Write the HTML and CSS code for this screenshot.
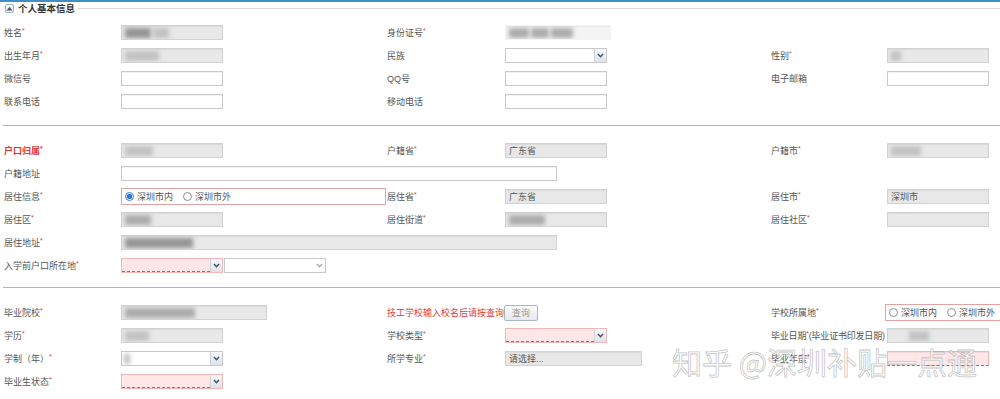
FILE: index.html
```html
<!DOCTYPE html>
<html lang="zh-CN">
  <head>
    <meta charset="UTF-8" />
    <title>个人基本信息</title>
    <link rel="stylesheet" href="styles.css">
  </head>
  <body>
    <div class="page">
      <div class="legend">
        <span class="legend-toggle">
          <svg width="7" height="5" viewBox="0 0 7 5"><path d="M0.5 4.5 L3.5 0.8 L6.5 4.5 Z" fill="#4a5d78" /></svg>
        </span>
        <span class="legend-title">个人基本信息</span>
        <span class="legend-line"></span>
      </div>

      <!-- 基本信息 -->
      <div class="section section-first">
        <div class="form-grid">
          <label class="lbl">姓名<i class="req">*</i></label>
          <div class="fld"><div class="input ro"><span class="blur b-dark" style="width: 26px"></span><span class="blur b-light" style="width: 16px"></span></div></div>
          <label class="lbl">身份证号<i class="req">*</i></label>
          <div class="fld"><div class="input ro plain" style="width: 106px"><span class="blur b-mid" style="width: 20px"></span><span class="blur b-mid" style="width: 18px"></span><span class="blur b-mid" style="width: 22px"></span></div></div>
          <span></span><span></span>

          <label class="lbl">出生年月<i class="req">*</i></label>
          <div class="fld"><div class="input ro"><span class="blur b-light" style="width: 34px"></span></div></div>
          <label class="lbl">民族</label>
          <div class="fld"><div class="select"><span class="sel-val"></span><span class="sel-btn"><svg width="7" height="5" viewBox="0 0 7 5"><path d="M1 1 L3.5 3.8 L6 1" fill="none" stroke="#3d4f6a" stroke-width="1.4" /></svg></span></div></div>
          <label class="lbl">性别<i class="req">*</i></label>
          <div class="fld"><div class="input ro"><span class="blur b-light" style="width: 10px"></span></div></div>

          <label class="lbl">微信号</label>
          <div class="fld"><div class="input"></div></div>
          <label class="lbl">QQ号</label>
          <div class="fld"><div class="input"></div></div>
          <label class="lbl">电子邮箱</label>
          <div class="fld"><div class="input"></div></div>

          <label class="lbl">联系电话</label>
          <div class="fld"><div class="input"></div></div>
          <label class="lbl">移动电话</label>
          <div class="fld"><div class="input"></div></div>
          <span></span><span></span>
        </div>
      </div>

      <!-- 户籍与居住 -->
      <div class="section">
        <div class="form-grid">
          <label class="lbl lbl-strong">户口归属<i class="req">*</i></label>
          <div class="fld"><div class="input ro"><span class="blur b-light" style="width: 28px"></span></div></div>
          <label class="lbl">户籍省<i class="req">*</i></label>
          <div class="fld"><div class="input ro">广东省</div></div>
          <label class="lbl">户籍市<i class="req">*</i></label>
          <div class="fld"><div class="input ro"><span class="blur b-light" style="width: 30px"></span></div></div>

          <label class="lbl">户籍地址</label>
          <div class="fld fld-wide"><div class="input wide"></div></div>
          <span></span><span></span>

          <label class="lbl">居住信息<i class="req">*</i></label>
          <div class="fld">
            <div class="radio-box">
              <span class="radio on"></span><span class="radio-text">深圳市内</span>
              <span class="radio"></span><span class="radio-text">深圳市外</span>
            </div>
          </div>
          <label class="lbl">居住省<i class="req">*</i></label>
          <div class="fld"><div class="input ro">广东省</div></div>
          <label class="lbl">居住市<i class="req">*</i></label>
          <div class="fld"><div class="input ro">深圳市</div></div>

          <label class="lbl">居住区<i class="req">*</i></label>
          <div class="fld"><div class="input ro"><span class="blur b-mid" style="width: 26px"></span></div></div>
          <label class="lbl">居住街道<i class="req">*</i></label>
          <div class="fld"><div class="input ro"><span class="blur b-mid" style="width: 36px"></span></div></div>
          <label class="lbl">居住社区<i class="req">*</i></label>
          <div class="fld"><div class="input ro"></div></div>

          <label class="lbl">居住地址<i class="req">*</i></label>
          <div class="fld fld-wide"><div class="input ro wide"><span class="blur b-dark" style="width: 68px"></span></div></div>
          <span></span><span></span>

          <label class="lbl">入学前户口所在地<i class="req">*</i></label>
          <div class="fld fld-pair">
            <div class="select invalid"><span class="sel-val"></span><span class="sel-btn"><svg width="7" height="5" viewBox="0 0 7 5"><path d="M1 1 L3.5 3.8 L6 1" fill="none" stroke="#3d4f6a" stroke-width="1.4" /></svg></span></div>
            <div class="select"><span class="sel-val"></span><span class="sel-btn pale"><svg width="7" height="5" viewBox="0 0 7 5"><path d="M1 1 L3.5 3.8 L6 1" fill="none" stroke="#9aa4b2" stroke-width="1.2" /></svg></span></div>
          </div>
          <span></span><span></span><span></span><span></span>
        </div>
      </div>

      <!-- 学业信息 -->
      <div class="section section-last">
        <div class="form-grid">
          <label class="lbl">毕业院校<i class="req">*</i></label>
          <div class="fld"><div class="input ro" style="width: 146px"><span class="blur b-mid" style="width: 70px"></span></div></div>
          <div class="notice">
            <span class="notice-text">技工学校输入校名后请按查询</span>
            <button class="btn-query">查询</button>
          </div>
          <label class="lbl">学校所属地<i class="req">*</i></label>
          <div class="fld">
            <div class="radio-box radio-box-short">
              <span class="radio"></span><span class="radio-text">深圳市内</span>
              <span class="radio"></span><span class="radio-text">深圳市外</span>
            </div>
          </div>

          <label class="lbl">学历<i class="req">*</i></label>
          <div class="fld"><div class="input ro"><span class="blur b-light" style="width: 24px"></span></div></div>
          <label class="lbl">学校类型<i class="req">*</i></label>
          <div class="fld"><div class="select invalid"><span class="sel-val"></span><span class="sel-btn"><svg width="7" height="5" viewBox="0 0 7 5"><path d="M1 1 L3.5 3.8 L6 1" fill="none" stroke="#3d4f6a" stroke-width="1.4" /></svg></span></div></div>
          <label class="lbl lbl-long">毕业日期<i class="req">*</i>(毕业证书印发日期)</label>
          <div class="fld"><div class="input ro"><span class="blur b-light" style="width: 20px; margin-left: 18px"></span></div></div>

          <label class="lbl">学制（年）<i class="req">*</i></label>
          <div class="fld"><div class="select"><span class="sel-val"><span class="blur b-light" style="width: 6px"></span></span><span class="sel-btn"><svg width="7" height="5" viewBox="0 0 7 5"><path d="M1 1 L3.5 3.8 L6 1" fill="none" stroke="#3d4f6a" stroke-width="1.4" /></svg></span></div></div>
          <label class="lbl">所学专业<i class="req">*</i></label>
          <div class="fld"><div class="input ro" style="width: 137px">请选择...</div></div>
          <label class="lbl">毕业年度<i class="req">*</i></label>
          <div class="fld"><div class="input invalid"></div></div>

          <label class="lbl">毕业生状态<i class="req">*</i></label>
          <div class="fld"><div class="select invalid"><span class="sel-val"></span><span class="sel-btn"><svg width="7" height="5" viewBox="0 0 7 5"><path d="M1 1 L3.5 3.8 L6 1" fill="none" stroke="#3d4f6a" stroke-width="1.4" /></svg></span></div></div>
          <span></span><span></span><span></span><span></span>
        </div>
      </div>

      <div class="watermark">知乎 @深圳补贴一点通</div>
    </div>
  </body>
</html>
```

FILE: styles.css
```css
* {
  margin: 0;
  padding: 0;
  box-sizing: border-box;
}

body {
  font-family: "Liberation Sans", "Noto Sans CJK SC", sans-serif;
  font-size: 9px;
  color: #555;
  background: #fff;
  width: 1000px;
  height: 399px;
  overflow: hidden;
}

.page {
  position: relative;
  border-top: 2px solid #3f8fbf;
  height: 399px;
}

.legend {
  display: flex;
  align-items: center;
  height: 12px;
  padding-left: 5px;
}

.legend-toggle {
  width: 9px;
  height: 9px;
  border: 1px solid #9fb0c6;
  border-radius: 2px;
  background: linear-gradient(#fdfdfe, #e4e9f0);
  display: flex;
  align-items: center;
  justify-content: center;
}

.legend-title {
  margin-left: 4px;
  font-size: 9.5px;
  font-weight: bold;
  color: #333;
}

.legend-line {
  flex: 1;
  height: 1px;
  background: #d6dbe0;
  margin-left: 3px;
}

.section {
  margin-left: 3px;
  padding: 13px 0 10px;
  border-bottom: 1px solid #b4b4b4;
}

.section-first {
  padding-top: 7px;
  padding-bottom: 12px;
}

.section-last {
  border-bottom: none;
}

.form-grid {
  display: grid;
  grid-template-columns: 117px 266px 118px 266px 116px 114px;
  grid-auto-rows: 23px;
  align-items: center;
  padding-left: 1px;
}

.lbl {
  white-space: nowrap;
  color: #555;
}

.lbl-strong {
  color: #d9362f;
  font-weight: bold;
}

.lbl-long {
  letter-spacing: -0.2px;
}

.req {
  font-style: normal;
  color: #e0403a;
  font-size: 7px;
  vertical-align: 3px;
}

.fld {
  display: flex;
  align-items: center;
  min-width: 0;
}

.fld-wide {
  grid-column: span 3;
}

.fld-pair {
  gap: 1px;
}

.input {
  width: 102px;
  height: 15px;
  border: 1px solid #c9c9c9;
  background: #fff;
  box-shadow: inset 0 1px 1px rgba(0, 0, 0, 0.06);
  display: flex;
  align-items: center;
  padding-left: 3px;
  color: #555;
  white-space: nowrap;
  overflow: hidden;
}

.input.ro {
  background: #e8e8e8;
  border-color: #d2d2d2;
}

.input.plain {
  background: #f4f4f4;
  border-color: #f4f4f4;
}

.input.wide {
  width: 436px;
}

.input.invalid {
  background: #ffe7e7;
  border-color: #f1b7b7;
  border-bottom: 1px dashed #e05050;
}

.blur {
  display: inline-block;
  height: 10px;
  filter: blur(2px);
  margin-right: 2px;
}

.b-dark {
  background: #959595;
}

.b-mid {
  background: #acacac;
}

.b-light {
  background: #c2c2c2;
}

.select {
  width: 102px;
  height: 15px;
  border: 1px solid #c9c9c9;
  background: #fff;
  display: flex;
}

.select.invalid .sel-val {
  background: #ffe7e7;
  border-bottom: 1px dashed #e05050;
}

.select.invalid {
  border-color: #f1b7b7;
}

.sel-val {
  flex: 1;
  display: flex;
  align-items: center;
  padding-left: 2px;
}

.sel-btn {
  width: 12px;
  border-left: 1px solid #cfd3d9;
  background: linear-gradient(#f6f7f9, #dfe3e8);
  display: flex;
  align-items: center;
  justify-content: center;
}

.sel-btn.pale {
  background: #fff;
  border-left: none;
}

.radio-box {
  width: 265px;
  height: 17px;
  border: 1px solid #e3a3a3;
  display: flex;
  align-items: center;
  padding-left: 3px;
  flex-shrink: 0;
}

.radio-box-short {
  width: 124px;
  margin-left: -2px;
}

.radio {
  flex-shrink: 0;
  width: 9px;
  height: 9px;
  border-radius: 50%;
  border: 1px solid #8a8f96;
  background: #fff;
  margin-right: 3px;
}

.radio.on {
  border-color: #3b7fd6;
  background: radial-gradient(circle, #2f78d8 0 2.6px, #fff 3px);
}

.radio-text {
  white-space: nowrap;
  margin-right: 10px;
  color: #555;
}

.notice {
  grid-column: span 2;
  display: flex;
  align-items: center;
}

.notice-text {
  color: #e03a35;
  width: 117px;
  white-space: nowrap;
}

.btn-query {
  font-family: inherit;
  font-size: 9px;
  color: #9a9a9a;
  width: 34px;
  height: 16px;
  border: 1px solid #a9b6c8;
  border-radius: 2px;
  background: linear-gradient(#fbfbfc, #e6e9ee);
}

.watermark {
  position: absolute;
  left: 672px;
  top: 337px;
  font-family: "Noto Sans CJK SC", sans-serif;
  font-size: 30px;
  color: rgba(255, 255, 255, 0.75);
  -webkit-text-stroke: 0.8px rgba(120, 120, 120, 0.45);
  white-space: nowrap;
  pointer-events: none;
}
```
